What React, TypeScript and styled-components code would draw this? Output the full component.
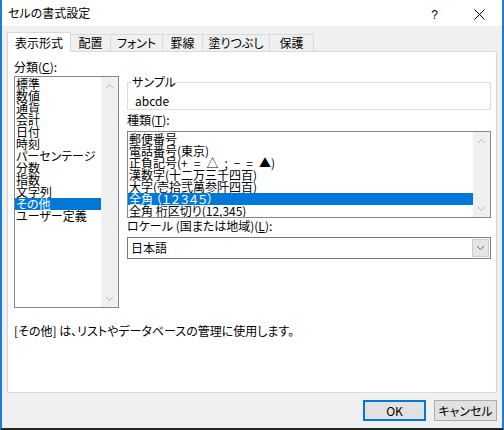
import React from 'react';
import styled, { createGlobalStyle } from 'styled-components';

const GlobalStyle = createGlobalStyle`
  html, body {
    margin: 0;
    padding: 0;
    background: #fff;
  }
  body {
    font-family: 'Noto Sans CJK JP', 'Noto Sans', sans-serif;
    font-size: 12px;
    color: #000;
  }
  * {
    box-sizing: border-box;
  }
`;

const Window = styled.div`
  width: 504px;
  height: 430px;
  display: flex;
  flex-direction: column;
  background: #f0f0f0;
  border-left: 2px solid #1a7fd4;
  border-right: 2px solid #1a7fd4;
  border-bottom: 2px solid #262626;
  font-feature-settings: 'palt';
  overflow: hidden;
`;

const TitleBar = styled.div`
  height: 26px;
  flex: none;
  display: flex;
  align-items: center;
  background: #fff;
  padding-left: 6px;
`;

const Title = styled.div`
  flex: 1;
  font-size: 12px;
  line-height: 14px;
`;

const CaptionButton = styled.div`
  width: 45px;
  height: 26px;
  display: flex;
  align-items: center;
  justify-content: center;
  padding-top: 3px;
  font-family: 'Liberation Sans', sans-serif;
  font-size: 12px;
`;

const Body = styled.div`
  flex: 1;
  display: flex;
  flex-direction: column;
  padding: 6px 5px 0 5px;
`;

const TabRow = styled.div`
  display: flex;
  align-items: flex-end;
`;

const Tab = styled.div<{ $active?: boolean; $w: number }>`
  position: relative;
  width: ${(p) => p.$w}px;
  height: ${(p) => (p.$active ? 20 : 17)}px;
  margin-bottom: ${(p) => (p.$active ? -1 : 0)}px;
  z-index: ${(p) => (p.$active ? 1 : 0)};
  display: flex;
  align-items: center;
  justify-content: center;
  border: 1px solid #d9d9d9;
  border-bottom: none;
  background: ${(p) => (p.$active ? '#fff' : '#f0f0f0')};
  font-size: 12px;
  line-height: 12px;
  & + & {
    margin-left: -1px;
  }
`;

const Panel = styled.div`
  height: 342px;
  display: flex;
  flex-direction: column;
  background: #fff;
  border: 1px solid #d9d9d9;
  padding: 9px 5px 0 6px;
`;

const Columns = styled.div`
  display: flex;
  gap: 8px;
`;

const LeftColumn = styled.div`
  width: 105px;
  display: flex;
  flex-direction: column;
`;

const RightColumn = styled.div`
  width: 364px;
  display: flex;
  flex-direction: column;
`;

const Label = styled.div<{ $top?: number }>`
  font-size: 12px;
  line-height: 12px;
  height: 12px;
  margin-top: ${(p) => p.$top ?? 0}px;
  white-space: nowrap;
`;

const ListBox = styled.div<{ $h: number; $top: number }>`
  height: ${(p) => p.$h}px;
  margin-top: ${(p) => p.$top}px;
  display: flex;
  border: 1px solid #828790;
  background: #fff;
`;

const Items = styled.div`
  flex: 1;
  display: flex;
  flex-direction: column;
  padding-top: 1px;
  overflow: hidden;
`;

const Item = styled.div<{ $selected?: boolean }>`
  height: 12px;
  line-height: 12px;
  font-size: 12px;
  padding-left: 1px;
  white-space: nowrap;
  background: ${(p) => (p.$selected ? '#0078d7' : 'transparent')};
  color: ${(p) => (p.$selected ? '#fff' : '#000')};
`;

const ScrollBar = styled.div`
  width: 17px;
  flex: none;
  display: flex;
  flex-direction: column;
  justify-content: space-between;
  background: #f0f0f0;
`;

const ScrollArrow = styled.div`
  height: 17px;
  display: flex;
  align-items: center;
  justify-content: center;
`;

const GroupBox = styled.fieldset`
  margin: 15px 0 0 0;
  padding: 0 7px 2px 7px;
  min-width: 0;
  border: 1px solid #dcdcdc;
`;

const GroupLegend = styled.legend`
  padding: 0 1px;
  margin-left: -4px;
  font-size: 12px;
  line-height: 12px;
`;

const Sample = styled.div`
  margin-top: 7px;
  font-size: 12px;
  line-height: 12px;
`;

const Combo = styled.div`
  height: 22px;
  margin-top: 5px;
  display: flex;
  align-items: center;
  border: 1px solid #7a7a7a;
  padding: 1px;
  background: #fff;
`;

const ComboText = styled.div`
  flex: 1;
  padding-left: 2px;
  font-size: 12px;
  line-height: 12px;
`;

const ComboButton = styled.div`
  width: 17px;
  height: 18px;
  display: flex;
  align-items: center;
  justify-content: center;
  background: #e5e5e5;
  border: 1px solid #cccccc;
`;

const Description = styled.div`
  margin-top: 17px;
  font-size: 12px;
  line-height: 12px;
`;

const ButtonRow = styled.div`
  display: flex;
  justify-content: flex-end;
  gap: 8px;
  margin-top: 7px;
`;

const DialogButton = styled.div<{ $default?: boolean }>`
  width: 63px;
  height: 21px;
  display: flex;
  align-items: center;
  justify-content: center;
  background: #e1e1e1;
  border: ${(p) => (p.$default ? '2px solid #0078d7' : '1px solid #adadad')};
  font-size: 12px;
  line-height: 12px;
`;

const Chevron: React.FC<{ dir: 'up' | 'down'; color: string }> = ({ dir, color }) => (
  <svg width="9" height="6" viewBox="0 0 9 6">
    <polyline
      points={dir === 'up' ? '1,5 4.5,1.5 8,5' : '1,1 4.5,4.5 8,1'}
      fill="none"
      stroke={color}
      strokeWidth="1"
    />
  </svg>
);

const Scroll: React.FC = () => (
  <ScrollBar>
    <ScrollArrow>
      <Chevron dir="up" color="#b4b4b4" />
    </ScrollArrow>
    <ScrollArrow>
      <Chevron dir="down" color="#b4b4b4" />
    </ScrollArrow>
  </ScrollBar>
);

const tabs = [
  { label: '表示形式', w: 64 },
  { label: '配置', w: 41 },
  { label: 'フォント', w: 53 },
  { label: '罫線', w: 41 },
  { label: '塗りつぶし', w: 68 },
  { label: '保護', w: 45 },
];

const categories = [
  '標準',
  '数値',
  '通貨',
  '会計',
  '日付',
  '時刻',
  'パーセンテージ',
  '分数',
  '指数',
  '文字列',
  'その他',
  'ユーザー定義',
];

// en spaces keep the symbol line as loose as in the dialog
const types = [
  '郵便番号',
  '電話番号(東京)',
  '正負記号(+\u2002=\u2002△\u2002;\u2002−\u2002=\u2002▲)',
  '漢数字(十二万三千四百)',
  '大字(壱拾弐萬参阡四百)',
  '全角 （１２３４５）',
  '全角 桁区切り(12,345)',
];

const App: React.FC = () => (
  <>
    <GlobalStyle />
    <Window>
      <TitleBar>
        <Title>セルの書式設定</Title>
        <CaptionButton>?</CaptionButton>
        <CaptionButton>
          <svg width="11" height="11" viewBox="0 0 11 11">
            <path d="M0.5 0.5 L10.5 10.5 M10.5 0.5 L0.5 10.5" stroke="#000" strokeWidth="1" />
          </svg>
        </CaptionButton>
      </TitleBar>
      <Body>
        <TabRow>
          {tabs.map((t, i) => (
            <Tab key={t.label} $w={t.w} $active={i === 0}>
              {t.label}
            </Tab>
          ))}
        </TabRow>
        <Panel>
          <Columns>
            <LeftColumn>
              <Label>
                分類(<u>C</u>):
              </Label>
              <ListBox $h={232} $top={3}>
                <Items>
                  {categories.map((c) => (
                    <Item key={c} $selected={c === 'その他'}>
                      {c}
                    </Item>
                  ))}
                </Items>
                <Scroll />
              </ListBox>
            </LeftColumn>
            <RightColumn>
              <GroupBox>
                <GroupLegend>サンプル</GroupLegend>
                <Sample>abcde</Sample>
              </GroupBox>
              <Label $top={4}>
                種類(<u>T</u>):
              </Label>
              <ListBox $h={87} $top={5}>
                <Items>
                  {types.map((t, i) => (
                    <Item key={t} $selected={i === 5}>
                      {t}
                    </Item>
                  ))}
                </Items>
                <Scroll />
              </ListBox>
              <Label $top={2}>
                ロケール (国または地域)(<u>L</u>):
              </Label>
              <Combo>
                <ComboText>日本語</ComboText>
                <ComboButton>
                  <Chevron dir="down" color="#606060" />
                </ComboButton>
              </Combo>
            </RightColumn>
          </Columns>
          <Description>[その他] は、リストやデータベースの管理に使用します。</Description>
        </Panel>
        <ButtonRow>
          <DialogButton $default>OK</DialogButton>
          <DialogButton>キャンセル</DialogButton>
        </ButtonRow>
      </Body>
    </Window>
  </>
);

export default App;
